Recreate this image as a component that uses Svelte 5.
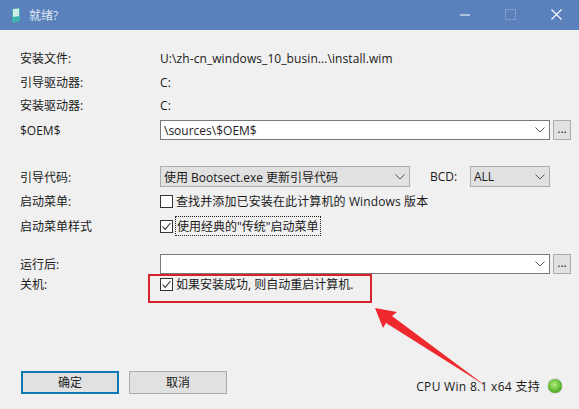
<script>
	const infoRows = [
		{ label: "安装文件:", value: "U:\\zh-cn_windows_10_busin...\\install.wim" },
		{ label: "引导驱动器:", value: "C:" },
		{ label: "安装驱动器:", value: "C:" }
	];
</script>

{#snippet chevron()}
	<svg class="chevron" width="10" height="6" viewBox="0 0 10 6">
		<path d="M0.5 0.5 L5 5 L9.5 0.5" fill="none" stroke="#555" stroke-width="1" />
	</svg>
{/snippet}

{#snippet check()}
	<svg class="box" width="13" height="13" viewBox="0 0 13 13">
		<rect x="0.5" y="0.5" width="12" height="12" fill="#fff" stroke="#333" />
		<path d="M2.5 6.5 L5.2 9.4 L10.5 3" fill="none" stroke="#333" stroke-width="1.1" />
	</svg>
{/snippet}

<div class="window">
	<header class="titlebar">
		<svg class="app-icon" width="9" height="15" viewBox="0 0 9 15">
			<path d="M0 1 L8 0 L8 13 L1 15 L0 14 Z" fill="#3fb3b0" />
			<path d="M1 1 L7 0.5 L7 8 L1 9 Z" fill="#cfeee8" />
		</svg>
		<span class="title">就绪?</span>
		<div class="controls">
			<svg class="ctl-min" width="10" height="2" viewBox="0 0 10 2"><rect width="10" height="1" y="0.5" fill="#fff" /></svg>
			<svg class="ctl-max" width="11" height="11" viewBox="0 0 11 11"><rect x="0.5" y="0.5" width="10" height="10" fill="none" stroke="#7d9dcb" /></svg>
			<svg class="ctl-close" width="11" height="11" viewBox="0 0 11 11"><path d="M0.5 0.5 L10.5 10.5 M10.5 0.5 L0.5 10.5" stroke="#fff" stroke-width="1.1" /></svg>
		</div>
	</header>

	<main class="form">
		{#each infoRows as row}
			<div class="row info">
				<span class="label">{row.label}</span>
				<span class="value">{row.value}</span>
			</div>
		{/each}

		<div class="row oem">
			<span class="label">$OEM$</span>
			<div class="combo">
				<span>\sources\$OEM$</span>
				{@render chevron()}
			</div>
			<div class="dots">...</div>
		</div>

		<div class="row boot">
			<span class="label">引导代码:</span>
			<div class="select wide">
				<span>使用 Bootsect.exe 更新引导代码</span>
				{@render chevron()}
			</div>
			<span class="bcd-label">BCD:</span>
			<div class="select narrow">
				<span>ALL</span>
				{@render chevron()}
			</div>
		</div>

		<div class="row opt first">
			<span class="label">启动菜单:</span>
			<div class="checkline">
				<svg class="box" width="13" height="13" viewBox="0 0 13 13">
					<rect x="0.5" y="0.5" width="12" height="12" fill="#fff" stroke="#333" />
				</svg>
				<span class="wide-text">查找并添加已安装在此计算机的 Windows 版本</span>
			</div>
		</div>

		<div class="row opt second">
			<span class="label">启动菜单样式</span>
			<div class="checkline">
				{@render check()}
				<span class="focused">使用经典的"传统"启动菜单</span>
			</div>
		</div>

		<div class="row after">
			<span class="label">运行后:</span>
			<div class="combo">
				<span></span>
				{@render chevron()}
			</div>
			<div class="dots">...</div>
		</div>

		<div class="row opt shutdown">
			<span class="label">关机:</span>
			<div class="checkline">
				{@render check()}
				<span>如果安装成功, 则自动重启计算机.</span>
			</div>
		</div>
	</main>

	<footer class="footer">
		<div class="btn default">确定</div>
		<div class="btn">取消</div>
		<div class="status">
			<span class="status-text">CPU Win 8.1 x64 支持</span>
			<span class="led"></span>
		</div>
	</footer>

	<div class="mark-box"></div>
	<svg class="mark-arrow" width="579" height="409" viewBox="0 0 579 409">
		<path d="M375 308 L397 312 L392 316 L486 386 L386 323 L383 328 Z" fill="#ee2a2e" />
	</svg>
</div>

<style>
	:global(body) {
		margin: 0;
	}

	.window {
		position: relative;
		width: 579px;
		height: 409px;
		overflow: hidden;
		background: #f0f0f0;
		color: #1a1a1a;
		font-family: "Open Sans", "Noto Sans CJK SC", sans-serif;
		font-size: 12px;
		display: flex;
		flex-direction: column;
	}

	.titlebar {
		height: 30px;
		flex: none;
		background: #5a81bb;
		display: flex;
		align-items: center;
		padding-left: 12px;
		color: #dfe7f2;
	}

	.title {
		margin-left: 8px;
	}

	.controls {
		margin-left: auto;
		display: flex;
		align-items: center;
		padding-right: 17px;
	}

	.ctl-min {
		margin-right: 35px;
	}

	.ctl-max {
		margin-right: 35px;
		margin-top: -2px;
	}

	.ctl-close {
		margin-top: -2px;
	}

	.form {
		padding: 16px 8px 0 20px;
		flex: 1;
		display: flex;
		flex-direction: column;
	}

	.row {
		display: flex;
		align-items: center;
		height: 24px;
	}

	.info + .info + .info {
		margin-top: -1px;
	}

	.value {
		letter-spacing: 0.08px;
	}

	.label {
		width: 140px;
		flex: none;
	}

	.oem {
		height: 20px;
		margin-top: 3px;
	}

	.combo {
		width: 390px;
		height: 20px;
		box-sizing: border-box;
		border: 1px solid #7a7a7a;
		background: #fff;
		display: flex;
		align-items: center;
		justify-content: space-between;
		padding: 0 4px 0 3px;
		color: #222;
	}

	.dots {
		width: 18px;
		height: 20px;
		box-sizing: border-box;
		margin-left: 3px;
		border: 1px solid #adadad;
		background: #e1e1e1;
		text-align: center;
		line-height: 16px;
	}

	.boot {
		height: 21px;
		margin-top: 26px;
	}

	.select {
		height: 21px;
		box-sizing: border-box;
		border: 1px solid #adadad;
		background: #e1e1e1;
		display: flex;
		align-items: center;
		justify-content: space-between;
		padding: 0 4px 0 3px;
	}

	.wide {
		width: 250px;
	}

	.narrow {
		width: 80px;
	}

	.bcd-label {
		margin-left: 20px;
		width: 40px;
	}

	.first {
		margin-top: 2px;
	}

	.second {
		margin-top: 1px;
	}

	.checkline {
		display: flex;
		align-items: center;
		gap: 3px;
	}

	.wide-text {
		letter-spacing: 0.12px;
	}

	.box {
		flex: none;
	}

	.focused {
		outline: 1px dotted #222;
		outline-offset: 0;
		padding: 0 1px;
	}

	.after {
		height: 20px;
		margin-top: 16px;
	}

	.shutdown {
		margin-top: -2px;
	}

	.footer {
		flex: none;
		height: 23px;
		display: flex;
		align-items: center;
		gap: 10px;
		padding: 0 17px 15px 21px;
	}

	.btn {
		width: 98px;
		height: 23px;
		box-sizing: border-box;
		border: 1px solid #adadad;
		background: #e1e1e1;
		text-align: center;
		line-height: 21px;
	}

	.default {
		border: 2px solid #0f78b5;
		line-height: 19px;
	}

	.status {
		margin-left: auto;
		display: flex;
		align-items: center;
		gap: 8px;
		align-self: flex-end;
		margin-bottom: -1px;
	}

	.status-text {
		letter-spacing: 0.3px;
	}

	.led {
		width: 14px;
		height: 14px;
		border-radius: 50%;
		background: radial-gradient(circle at 45% 40%, #b4ec7a, #57b52c 60%, #3d8a22);
		box-shadow: 0 0 1px #444;
	}

	.mark-box {
		position: absolute;
		left: 148px;
		top: 274px;
		width: 224px;
		height: 29px;
		box-sizing: border-box;
		border: 2px solid #d4232b;
	}

	.mark-arrow {
		position: absolute;
		left: 0;
		top: 0;
	}
</style>
